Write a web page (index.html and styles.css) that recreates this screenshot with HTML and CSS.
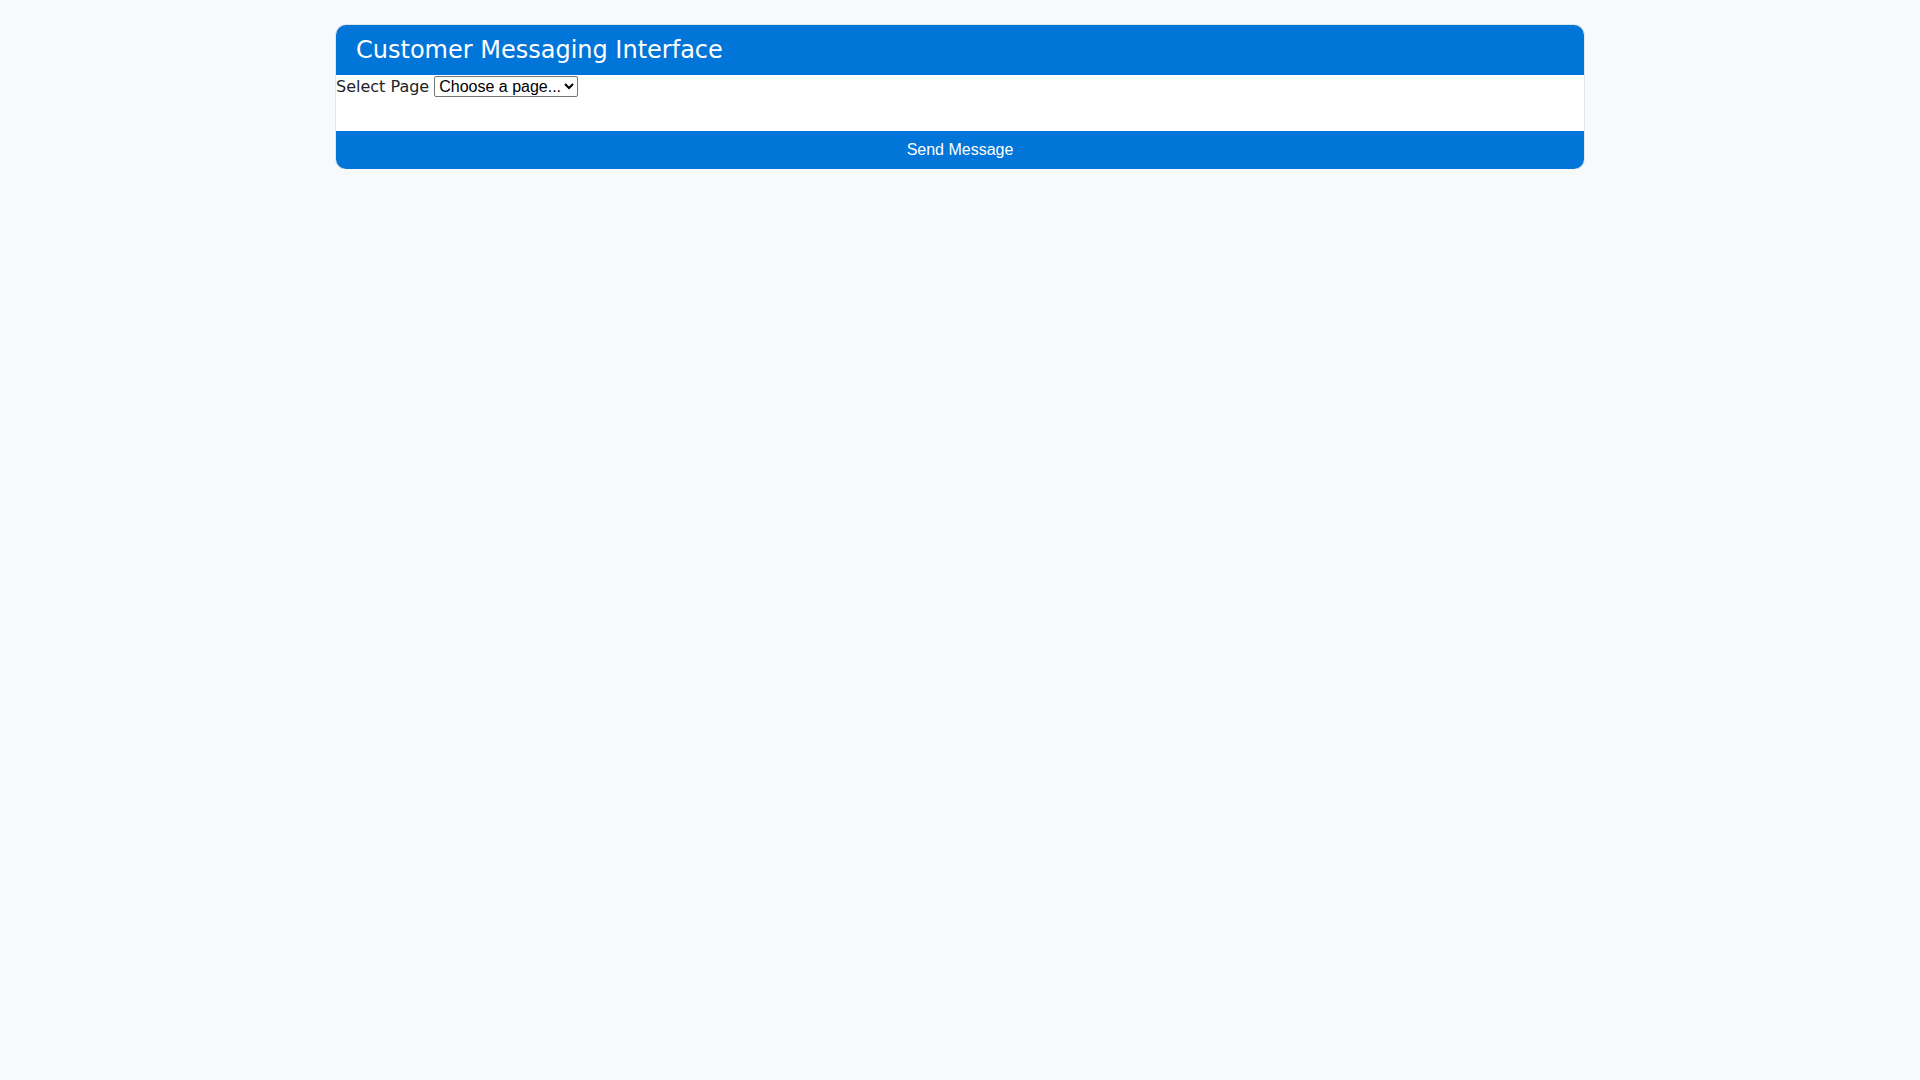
FILE: index.html
```html
<!DOCTYPE html>
<html lang="en">
<head>
<meta charset="utf-8">
<title>Customer Messaging Interface</title>
<link rel="stylesheet" href="styles.css">
</head>
<body>
<div class="card">
  <div class="card-header">Customer Messaging Interface</div>
  <div class="card-body">
    <label class="page-label" for="page">Select Page</label>
    <select id="page" class="page-select">
      <option>Choose a page...</option>
    </select>
  </div>
  <button class="send-btn" type="button">Send Message</button>
</div>
</body>
</html>
```

FILE: styles.css
```css
html, body {
  margin: 0;
  padding: 0;
}
body {
  background: #f8f9fa;
  font-family: "DejaVu Sans", sans-serif;
  padding-top: 25px;
}
.card {
  width: 65%;
  margin: 0 auto;
  background: #fff;
  border-radius: 10px;
  overflow: hidden;
  box-shadow: 0 0 0 1px rgba(0, 0, 0, 0.08);
}
.card-header {
  background: #0275d8;
  color: #fff;
  font-size: 24px;
  height: 50px;
  padding: 0 20px;
  display: flex;
  align-items: center;
  box-sizing: border-box;
}
.card-body {
  height: 56px;
  box-sizing: border-box;
  padding-top: 1px;
  display: flex;
  align-items: flex-start;
  gap: 5px;
  font-size: 16px;
  color: #212529;
}
.page-label {
  line-height: 21px;
}
.page-select {
  font-family: "Liberation Sans", Arial, sans-serif;
  font-size: 16px;
  height: 21px;
  border: 1px solid #767676;
  border-radius: 2px;
  background: #fff;
  color: #000;
  padding: 0;
}
.send-btn {
  display: block;
  width: 100%;
  height: 38px;
  border: none;
  background: #0275d8;
  color: #fff;
  font-family: "Liberation Sans", Arial, sans-serif;
  font-size: 16px;
  cursor: pointer;
}
```
